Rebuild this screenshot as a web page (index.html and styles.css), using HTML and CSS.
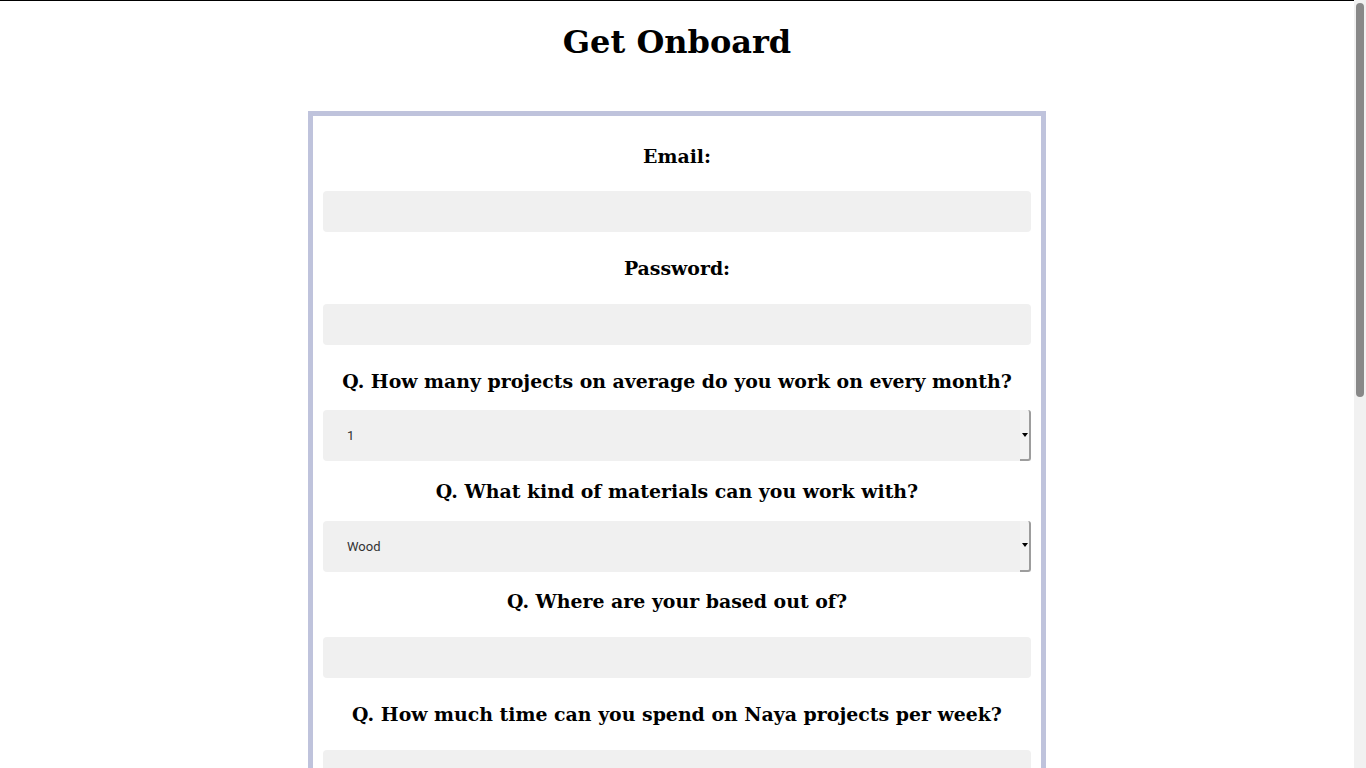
FILE: index.html
```html
<!DOCTYPE html>
<html lang="en">
<head>
<meta charset="utf-8">
<title>Get Onboard</title>
<link rel="stylesheet" href="styles.css">
</head>
<body>
<div class="window">
  <div class="viewport">
    <div class="page">
      <h1 class="title">Get Onboard</h1>
      <form class="card">
        <label class="q" for="email">Email:</label>
        <input class="field" id="email" type="email">

        <label class="q" for="password">Password:</label>
        <input class="field" id="password" type="password">

        <label class="q" for="projects">Q. How many projects on average do you work on every month?</label>
        <div class="select-wrap">
          <select class="select" id="projects">
            <option>1</option><option>2</option><option>3</option><option>4+</option>
          </select>
          <span class="select-btn"><span class="arrow"></span></span>
        </div>

        <label class="q" for="materials">Q. What kind of materials can you work with?</label>
        <div class="select-wrap">
          <select class="select" id="materials">
            <option>Wood</option><option>Metal</option><option>Glass</option><option>Stone</option>
          </select>
          <span class="select-btn"><span class="arrow"></span></span>
        </div>

        <label class="q" for="location">Q. Where are your based out of?</label>
        <input class="field" id="location" type="text">

        <label class="q" for="time">Q. How much time can you spend on Naya projects per week?</label>
        <input class="field" id="time" type="text">

        <label class="q" for="rate">Q. What is your expected hourly rate?</label>
        <input class="field" id="rate" type="text">

        <label class="q" for="workshop">Q. Do you have access to a workshop?</label>
        <div class="select-wrap">
          <select class="select" id="workshop">
            <option>Yes</option><option>No</option>
          </select>
          <span class="select-btn"><span class="arrow"></span></span>
        </div>

        <label class="q" for="about">Q. Tell us a little about yourself</label>
        <textarea class="field area" id="about"></textarea>

        <div class="actions">
          <button class="submit" type="button">Submit</button>
        </div>
      </form>
    </div>
  </div>
  <div class="scrollbar" aria-hidden="true">
    <div class="thumb"></div>
  </div>
</div>
</body>
</html>
```
FILE: styles.css
```css
html,
body {
  margin: 0;
  height: 100%;
  overflow: hidden;
  background: #fff;
}

body {
  font-family: "DejaVu Serif", serif;
  color: #000;
}

.window {
  display: flex;
  height: 100vh;
}

.viewport {
  flex: 1;
  min-width: 0;
  overflow: hidden;
}

.scrollbar {
  width: 12px;
  flex: none;
  box-sizing: border-box;
  background: #f1f1f1;
  padding: 3px 2px 0 2px;
}

.thumb {
  height: 394px;
  border-radius: 4px;
  background: #888;
}

.page {
  border-top: 1px solid #000;
  padding-bottom: 60px;
}

.title {
  margin: 23px 0 0;
  font-size: 32px;
  line-height: 37px;
  font-weight: 700;
  text-align: center;
}

.card {
  box-sizing: border-box;
  width: 738px;
  margin: 50px auto 0;
  border: 5px solid #bfc3dc;
  padding: 10px;
  display: flex;
  flex-direction: column;
}

.q {
  display: block;
  margin: 18.72px 0;
  font-size: 18.9px;
  line-height: 22px;
  font-weight: 700;
  text-align: center;
}

.field {
  display: block;
  box-sizing: border-box;
  height: 41px;
  margin: 6px 0;
  border: none;
  border-radius: 4px;
  background: #f0f0f0;
  padding: 0 24px;
  font-family: Roboto, sans-serif;
  font-size: 13px;
  color: #333;
  outline: none;
}

.area {
  height: 120px;
  resize: none;
  padding-top: 12px;
}

.select-wrap {
  position: relative;
  height: 51px;
}

.select {
  -webkit-appearance: none;
  appearance: none;
  display: block;
  box-sizing: border-box;
  width: 100%;
  height: 51px;
  margin: 0;
  border: none;
  border-radius: 4px;
  background: #f0f0f0;
  padding: 0 0 0 24px;
  font-family: Roboto, sans-serif;
  font-size: 13px;
  color: #333;
  outline: none;
}

.select-btn {
  position: absolute;
  top: 0;
  right: 0;
  bottom: 0;
  width: 11px;
  box-sizing: border-box;
  background: #f3f3f3;
  border-right: 2px solid #9d9d9d;
  border-bottom: 2px solid #9d9d9d;
  border-radius: 0 3px 3px 0;
  display: flex;
  align-items: center;
  justify-content: center;
}

.arrow {
  width: 0;
  height: 0;
  border-left: 3px solid transparent;
  border-right: 3px solid transparent;
  border-top: 4px solid #000;
  margin-left: 1px;
}

.actions {
  display: flex;
  justify-content: center;
  margin: 30px 0 20px;
}

.submit {
  font-family: "DejaVu Serif", serif;
  font-weight: 700;
  font-size: 16px;
  padding: 10px 40px;
  border: none;
  border-radius: 4px;
  background: #bfc3dc;
  color: #000;
}
```
